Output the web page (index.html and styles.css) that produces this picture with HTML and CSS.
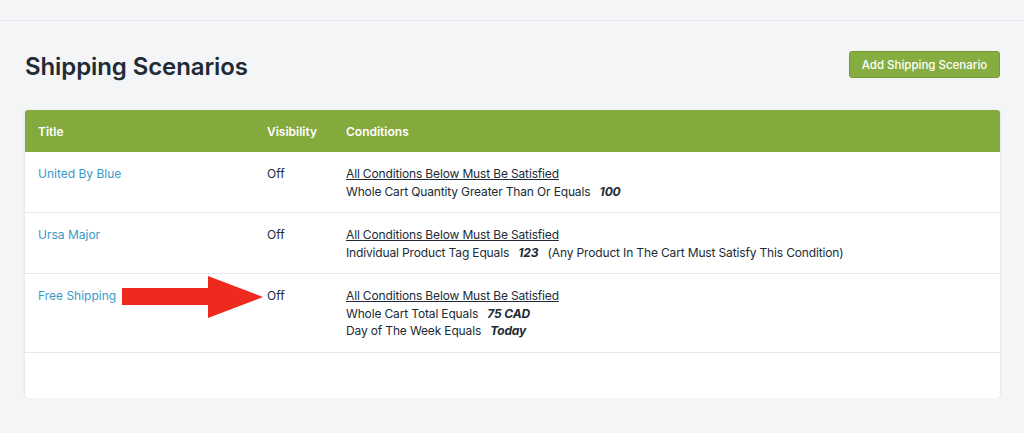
FILE: index.html
```html
<!DOCTYPE html>
<html lang="en">
<head>
    <meta charset="UTF-8">
    <meta name="viewport" content="width=device-width, initial-scale=1.0">
    <title>Shipping Scenarios</title>
    <link rel="stylesheet" href="styles.css">
</head>
<body>
  <div class="topbar"></div>

  <div class="page">
    <div class="page-header">
        <h1>Shipping Scenarios</h1>
        <button type="button" class="add-btn">Add Shipping Scenario</button>
    </div>

    <div class="card">
      <table class="scenarios">
        <thead>
          <tr>
            <th class="col-title">Title</th>
            <th class="col-vis">Visibility</th>
            <th>Conditions</th>
          </tr>
        </thead>
        <tbody>
          <tr>
            <td><a href="#">United By Blue</a></td>
            <td>Off</td>
            <td class="conditions">
              <span class="rule">All Conditions Below Must Be Satisfied</span>
              <span class="cond">Whole Cart Quantity Greater Than Or Equals <b>100</b></span>
            </td>
          </tr>
          <tr>
            <td><a href="#">Ursa Major</a></td>
            <td>Off</td>
            <td class="conditions">
              <span class="rule">All Conditions Below Must Be Satisfied</span>
              <span class="cond">Individual Product Tag Equals <b>123</b> <span class="note">(Any Product In The Cart Must Satisfy This Condition)</span></span>
            </td>
          </tr>
          <tr class="marked">
            <td>
              <a href="#">Free Shipping</a>
              <!-- annotation arrow -->
              <svg class="arrow" width="142" height="42" viewBox="0 0 142 42">
                <polygon points="0,12 86,12 86,0 141,21 86,42 86,29 0,29" fill="#ee2a1f"/>
              </svg>
            </td>
            <td>Off</td>
            <td class="conditions">
              <span class="rule">All Conditions Below Must Be Satisfied</span>
              <span class="cond">Whole Cart Total Equals <b>75 CAD</b></span>
              <span class="cond">Day of The Week Equals <b>Today</b></span>
            </td>
          </tr>
        </tbody>
      </table>
      <div class="card-foot"></div>
    </div>
  </div>
</body>
</html>
```

FILE: styles.css
```css
body {
  margin: 0;
  font-family: Inter, "Liberation Sans", sans-serif;
  background-color: #f4f5f7;
  color: #212b36;
}

.topbar {
  height: 20px;
  border-bottom: 1px solid #e3e5e8;
}

.page {
  padding: 31px 24px 0 25px;
}

.page-header {
  display: flex;
  justify-content: space-between;
  align-items: center;
  margin-bottom: 29px;
}

.page-header h1 {
  margin: 0;
  font-size: 24px;
  font-weight: 600;
  letter-spacing: -0.1px;
}

.add-btn {
  background-color: #86ad40;
  color: #fff;
  font-family: inherit;
  font-size: 11.5px;
  font-weight: 500;
  width: 151px;
  height: 27px;
  padding: 0;
  border: 1px solid #76993a;
  border-radius: 3px;
  margin-top: -4px;
  cursor: pointer;
}

.card {
  background-color: #fff;
  border-radius: 3px;
  box-shadow: 0 1px 3px rgba(0, 0, 0, 0.12);
  overflow: hidden;
}

.scenarios {
  width: 100%;
  border-collapse: collapse;
  font-size: 12px;
}

.scenarios th {
  background-color: #84aa3e;
  color: #fff;
  text-align: left;
  font-weight: 600;
  height: 42px;
  padding: 0 13px;
}

.col-title {
  width: 203px;
}

.col-vis {
  width: 53px;
}

.scenarios td {
  vertical-align: top;
  padding: 13px 13px 12px;
  border-bottom: 1px solid #e6e7e9;
  line-height: 17.5px;
}

.scenarios td.conditions {
  letter-spacing: -0.15px;
}

.scenarios a {
  color: #3a9ac6;
  text-decoration: none;
}

.rule {
  display: block;
  text-decoration: underline;
}

.cond {
  display: block;
}

.cond b {
  font-style: italic;
  margin-left: 6px;
}

.note {
  margin-left: 6px;
}

.marked td:first-child {
  position: relative;
}

.arrow {
  position: absolute;
  left: 97px;
  top: 2px;
}

.card-foot {
  height: 45px;
}
```
